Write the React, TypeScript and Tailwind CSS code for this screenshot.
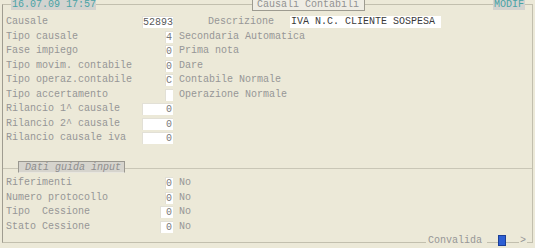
import React from 'react';

type Row = { label: string; value: string; box: string; desc?: string };

const upper: Row[] = [
  { label: 'Tipo causale', value: '4', box: 'w-[8px]', desc: 'Secondaria Automatica' },
  { label: 'Fase impiego', value: '0', box: 'w-[8px]', desc: 'Prima nota' },
  { label: 'Tipo movim. contabile', value: '0', box: 'w-[8px]', desc: 'Dare' },
  { label: 'Tipo operaz.contabile', value: 'C', box: 'w-[8px]', desc: 'Contabile Normale' },
  { label: 'Tipo accertamento', value: '', box: 'w-[8px]', desc: 'Operazione Normale' },
  { label: 'Rilancio 1^ causale', value: '0', box: 'w-[31px]' },
  { label: 'Rilancio 2^ causale', value: '0', box: 'w-[31px]' },
  { label: 'Rilancio causale iva', value: '0', box: 'w-[31px]' },
];

const lower: Row[] = [
  { label: 'Riferimenti', value: '0', box: 'w-[8px]', desc: 'No' },
  { label: 'Numero protocollo', value: '0', box: 'w-[8px]', desc: 'No' },
  { label: 'Tipo  Cessione', value: '0', box: 'w-[13px]', desc: 'No' },
  { label: 'Stato Cessione', value: '0', box: 'w-[13px]', desc: 'No' },
];

function Box({ value, w }: { value: string; w: string }) {
  return (
    <div className={`h-[12px] ${w} bg-white border-l border-t border-[#e2e0d6] text-right leading-[11px] text-[#7a7a7a] pr-[1px]`}>
      {value}
    </div>
  );
}

function FieldRow({ row, h }: { row: Row; h: string }) {
  return (
    <div className={`flex items-center ${h}`}>
      <div className="w-[170px] pl-[3px] flex items-center justify-between">
        <span className="whitespace-pre">{row.label}</span>
        <Box value={row.value} w={row.box} />
      </div>
      {row.desc && <span className="ml-[6px]">{row.desc}</span>}
    </div>
  );
}

export default function App() {
  return (
    <div className="relative w-[535px] h-[248px] overflow-hidden bg-[#ece9d8] font-['Liberation_Mono',monospace] text-[10px] leading-[12px] text-[#969696]">
      {/* main frame */}
      <div className="ml-[2px] mt-[4px] w-[531px] h-[239px] border border-[#c2bfae] border-l-[#9f9c90]">
        <div className="h-[163px] pt-[10px]">
          <div className="flex items-center h-[14.5px]">
            <div className="w-[170px] pl-[3px] flex items-center justify-between">
              <span>Causale</span>
              <div className="h-[12px] w-[31px] bg-white border-l border-t border-[#e2e0d6] text-right leading-[11px] text-[#5a5a5a]">
                52893
              </div>
            </div>
            <span className="ml-[35px]">Descrizione</span>
            <div className="ml-[16px] h-[12px] w-[151px] bg-white pl-[1px] leading-[12px] text-[#3a3a3a]">
              IVA N.C. CLIENTE SOSPESA
            </div>
          </div>
          {upper.map((r) => (
            <FieldRow key={r.label} row={r} h="h-[14.5px]" />
          ))}
        </div>

        {/* lower section */}
        <div className="relative border-t border-[#c9c6b6] pt-[7px]">
          <div className="absolute left-[15px] top-[-8px] h-[12px] w-[107px] bg-[#d6d4cd] border border-[#9a9890] border-b-[#e8e6de] pl-[6px] leading-[11px] italic text-[#8e8e8e]">
            Dati guida input
          </div>
          {lower.map((r) => (
            <FieldRow key={r.label} row={r} h="h-[14.6px]" />
          ))}
        </div>
      </div>

      {/* header labels over the frame line */}
      <div className="absolute left-[11px] top-0 h-[10px] w-[85px] bg-[#d3d3cf] pl-[1px] leading-[10px] text-[#4aa3a6]">
        16.07.09 17:57
      </div>
      <div className="absolute left-[252px] top-0 h-[11px] w-[113px] bg-[#efede4] border-l border-r border-b border-[#9d9b90] pl-[4px] leading-[10px] text-[#929292]">
        Causali Contabili
      </div>
      <div className="absolute left-[493px] top-0 h-[10px] w-[32px] bg-[#d3d3cf] pl-[1px] leading-[10px] text-[#4aa3a6]">
        MODIF
      </div>

      {/* bottom legend */}
      <div className="absolute left-[426px] top-[235px] flex items-center h-[11px]">
        <span className="bg-[#ece9d8] pl-[2px] pr-[5px] leading-[11px] text-[#969696]">Convalida</span>
        <span className="w-[11px]" />
        <span className="h-[11px] w-[8px] bg-[#2d5fd4] border border-[#1c3f96]" />
        <span className="w-[13px]" />
        <span className="bg-[#ece9d8] px-[1px] leading-[11px] text-[#969696]">&gt;</span>
      </div>
    </div>
  );
}
